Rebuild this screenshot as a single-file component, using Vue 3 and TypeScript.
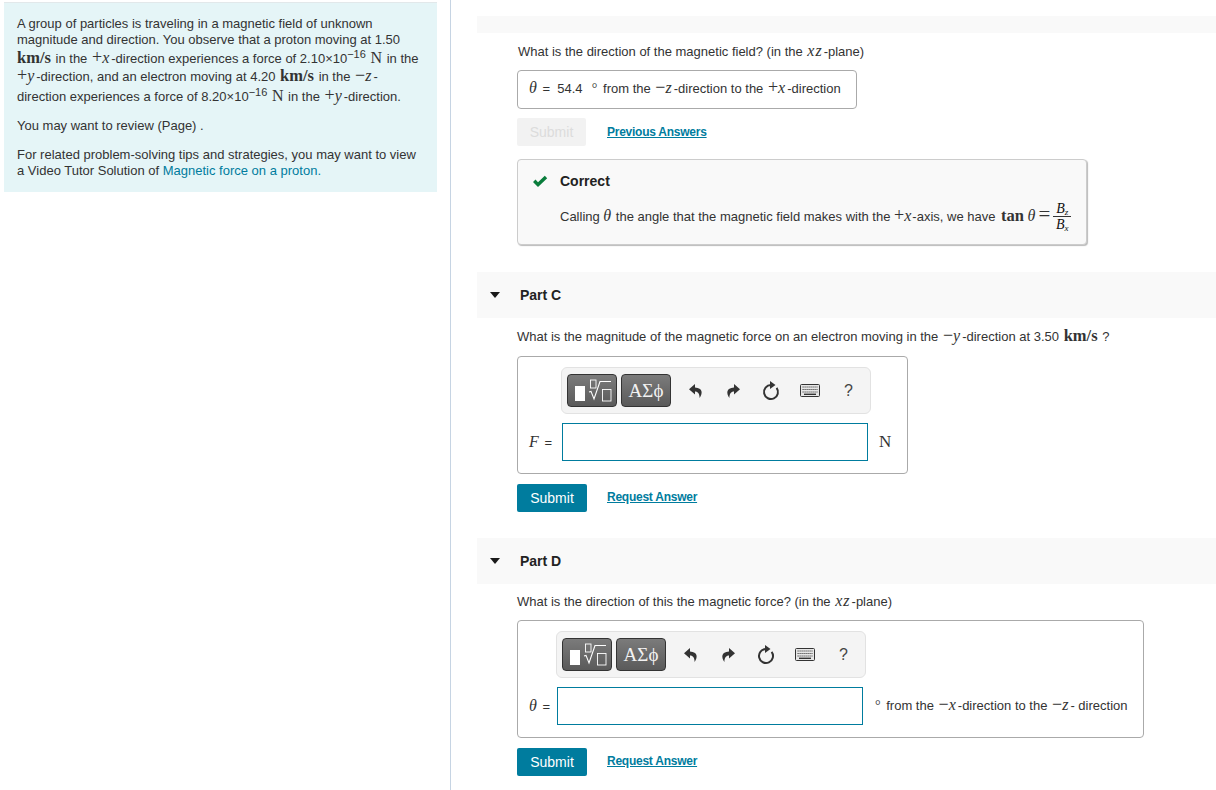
<script setup lang="ts">
interface Part { id: string; title: string; wide: boolean }
const parts: Part[] = [
  { id: 'c', title: 'Part C', wide: false },
  { id: 'd', title: 'Part D', wide: true },
]
</script>

<template>
  <div class="page">
    <aside class="left">
      <div class="callout">
        <div class="l l1">A group of particles is traveling in a magnetic field of unknown</div>
        <div class="l l2">magnitude and direction. You observe that a proton moving at 1.50</div>
        <div class="l l3"><span class="m b">km/s</span> in the <span class="m"><span class="op">+</span><i>x</i></span>-direction experiences a force of 2.10×10<sup class="s">−16</sup> <span class="m n">N</span> in the</div>
        <div class="l l4"><span class="m"><span class="op">+</span><i>y</i></span>-direction, and an electron moving at 4.20 <span class="m b">km/s</span> in the <span class="m"><span class="op">−</span><i>z</i></span>-</div>
        <div class="l l5">direction experiences a force of 8.20×10<sup class="s">−16</sup> <span class="m n">N</span> in the <span class="m"><span class="op">+</span><i>y</i></span>-direction.</div>
        <div class="l l6">You may want to review (Page) .</div>
        <div class="l l7">For related problem-solving tips and strategies, you may want to view</div>
        <div class="l">a Video Tutor Solution of <span class="tl">Magnetic force on a proton.</span></div>
      </div>
    </aside>

    <main class="right">
      <div class="stub"></div>
      <section class="body">
        <p class="q q-b">What is the direction of the magnetic field? (in the <span class="m"><i>xz</i></span>-plane)</p>
        <div class="ans-done">
          <span class="m th"><i>θ</i></span> =&nbsp; 54.4 &nbsp;<span class="deg">°</span> from the <span class="m"><span class="op">−</span><i>z</i></span>-direction to the <span class="m"><span class="op">+</span><i>x</i></span>-direction
        </div>
        <div class="actions">
          <button class="submit off">Submit</button>
          <a class="lnk prev">Previous Answers</a>
        </div>
        <div class="feedback">
          <div class="fb-head">
            <svg class="check" width="16" height="13" viewBox="0 0 16 13"><path d="M1 7 L3.5 4.6 L6 7.2 L12.8 .8 L15.2 3.2 L6 12 Z" fill="#0a7d3c"/></svg>
            <strong>Correct</strong>
          </div>
          <div class="fb-text">
            <span>Calling <span class="m"><i>θ</i></span> the angle that the magnetic field makes with the <span class="m"><span class="op">+</span><i>x</i></span>-axis, we have <span class="m b tan">tan</span> <span class="m"><i>θ</i></span><span class="m eq"><span class="op">=</span></span></span>
            <span class="frac"><span class="num"><i>B<sub>z</sub></i></span><span class="den"><i>B<sub>x</sub></i></span></span>
          </div>
        </div>
      </section>

      <template v-for="p in parts" :key="p.id">
        <header class="bar" :class="'bar-' + p.id">
          <svg class="caret" width="10" height="6" viewBox="0 0 10 6"><path d="M0 0H10L5 6Z" fill="#1a1a1a"/></svg>
          <span>{{ p.title }}</span>
        </header>
        <section class="body" :class="'body-' + p.id">
          <p v-if="p.id === 'c'" class="q">What is the magnitude of the magnetic force on an electron moving in the <span class="m"><span class="op">−</span><i>y</i></span>-direction at 3.50 <span class="m b">km/s</span> ?</p>
          <p v-else class="q">What is the direction of this the magnetic force? (in the <span class="m"><i>xz</i></span>-plane)</p>
          <div class="ans" :class="{ wide: p.wide }">
            <div class="toolbar">
              <div class="tbtn t1">
                <svg width="48" height="31" viewBox="1 1 48 31">
                  <rect x="8" y="12" width="10" height="15" fill="#fff"/>
                  <rect x="23.5" y="6" width="5.5" height="8" fill="none" stroke="#fff" stroke-width=".9"/>
                  <path d="M22 18 L24 17.4 L27 25 L33 7.5 H44" fill="none" stroke="#fff" stroke-width="1.1"/>
                  <rect x="35.5" y="15.5" width="8.5" height="11.5" fill="none" stroke="#fff" stroke-width=".9"/>
                </svg>
              </div>
              <div class="tbtn t2">ΑΣϕ</div>
              <div class="icons">
                <svg width="14" height="14" viewBox="0 0 14 14"><path d="M6 0 L0 5.2 L6 10.5 V7.4 C9 7.4 10.6 9.6 10.6 14 C13.8 9.5 14 3.8 6 3.4 Z" fill="#333"/></svg>
                <svg width="14" height="14" viewBox="0 0 14 14"><path d="M8 0 L14 5.2 L8 10.5 V7.4 C5 7.4 3.4 9.6 3.4 14 C.2 9.5 0 3.8 8 3.4 Z" fill="#333"/></svg>
                <svg width="18" height="20" viewBox="0 0 18 20"><path d="M9 4 A7 7 0 1 0 14.6 6.8" fill="none" stroke="#333" stroke-width="2"/><path d="M8 0 L13.5 4 L8 8 Z" fill="#333"/></svg>
                <svg width="20" height="13" viewBox="0 0 20 13"><rect x=".5" y=".5" width="19" height="12" rx="1" fill="#e6e6e6" stroke="#333"/><path d="M2.5 3H17.5M2.5 5.5H17.5M2.5 8H17.5" stroke="#444" stroke-width="1.2" stroke-dasharray="1.2 .8"/><path d="M4 10.3H16" stroke="#333" stroke-width="1.4"/></svg>
                <span class="help">?</span>
              </div>
            </div>
            <div class="row">
              <label v-if="p.id === 'c'" class="lab"><span class="m th"><i>F</i></span> =</label>
              <label v-else class="lab"><span class="m th"><i>θ</i></span> =</label>
              <div class="inp"></div>
              <span v-if="p.id === 'c'" class="unit">N</span>
              <span v-else class="tail"><span class="deg">°</span> from the <span class="m"><span class="op">−</span><i>x</i></span>-direction to the <span class="m"><span class="op">−</span><i>z</i></span>- direction</span>
            </div>
          </div>
          <div class="actions a2">
            <button class="submit">Submit</button>
            <a class="lnk">Request Answer</a>
          </div>
        </section>
      </template>
    </main>
  </div>
</template>

<style scoped>
.page { display: flex; width: 1216px; height: 790px; overflow: hidden; background: #fff; font-family: "Liberation Sans", Arial, sans-serif; font-size: 13px; color: #333; }
.left { width: 451px; flex: none; box-sizing: border-box; border-right: 1px solid #c6d4e3; padding: 2px 0 0 4px; }
.callout { width: 433px; height: 190px; box-sizing: border-box; background: #e5f5f7; border-top: 1px solid #e2e8ea; padding: 13px 0 0 13px; }
.l { font-size: 13px; line-height: 16px; white-space: nowrap; height: 16px; }
.l3 { margin-top: 3px; }
.l4 { margin-top: 2px; }
.l5 { margin-top: 4px; }
.l6 { margin-top: 13px; }
.l7 { margin-top: 13px; }
.tl { color: #007c9e; }
.m { font-family: "Liberation Serif", serif; font-size: 16px; line-height: 0; margin: 0 1px; }
.m.th { margin-left: 0; }
.l3 > .b:first-child { margin-left: 0; }
.l4 > .m:first-child { margin-left: 0; }
.m i { font-style: italic; letter-spacing: 1px; }
.op { font-size: 18px; }
.b { font-weight: 700; font-size: 16.5px; }
.n { font-weight: 400; font-size: 16px; }
.s { font-size: 11px; line-height: 0; vertical-align: 5px; font-weight: 400; }
.right { flex: 1; min-width: 0; padding-left: 26px; }
.stub { height: 17px; margin-top: 16px; background: #f9f9f9; }
.body { padding-left: 40px; }
.q { margin: 0; font-size: 13px; line-height: 18px; white-space: nowrap; padding-top: 10px; }
.q-b { padding-left: 1px; }
.body-d .q { padding-top: 9px; }
.ans-done { width: 340px; height: 39px; box-sizing: border-box; margin-top: 9px; border: 1px solid #aaa; border-radius: 4px; padding-left: 11px; line-height: 35px; white-space: nowrap; }
.deg { font-family: "Liberation Serif", serif; font-size: 14px; margin: 0 2px; }
.actions { display: flex; align-items: center; margin-top: 9px; height: 28px; }
.a2 { margin-top: 10px; }
.submit { width: 70px; height: 28px; border: 0; border-radius: 2px; background: #007c9e; color: #fff; font: 14px "Liberation Sans", Arial, sans-serif; padding: 0; }
.submit.off { background: #f2f2f2; color: #dcdcdc; width: 69px; }
.actions .off + .lnk { margin-left: 21px; }
.lnk { margin-left: 20px; margin-bottom: 2px; color: #007c9e; font-size: 12px; letter-spacing: -.25px; font-weight: 700; text-decoration: underline; }
.lnk.prev { margin-bottom: 0; }
.feedback { width: 570px; height: 86px; box-sizing: border-box; margin-top: 13px; background: #f9f9f9; border: 1px solid #ccc; border-radius: 4px; box-shadow: 1px 1px 1px #bbb; }
.fb-head { display: flex; align-items: center; height: 20px; margin-top: 11px; padding-left: 14px; }
.check { margin-right: 12px; }
.fb-head strong { font-size: 14px; color: #222; }
.fb-text { display: flex; align-items: center; height: 40px; margin-top: 5px; padding-left: 42px; white-space: pre; }
.fb-text .m { margin: 0; }
.fb-text .tan { margin-left: 2px; }
.fb-text .eq { margin-left: 2px; }
.fb-text .eq .op { font-size: 21px; }
.frac { display: inline-flex; flex-direction: column; align-items: center; font-family: "Liberation Serif", serif; font-size: 14px; margin-left: 3px; color: #111; }
.num { border-bottom: 1px solid #333; padding: 0 3px; line-height: 15px; }
.den { line-height: 15px; }
.frac sub { font-size: 9px; line-height: 0; vertical-align: -2px; }
.bar { display: flex; align-items: center; height: 46px; margin-top: 27px; background: #f9f9f9; font-weight: 700; font-size: 14px; color: #222; }
.bar-d { margin-top: 26px; }
.caret { margin: 0 20px 0 13px; }
.ans { width: 391px; height: 118px; box-sizing: border-box; margin-top: 10px; border: 1px solid #aaa; border-radius: 4px; padding-top: 10px; }
.ans.wide { width: 627px; margin-top: 9px; }
.toolbar { display: flex; align-items: center; width: 310px; height: 47px; box-sizing: border-box; margin-left: 43px; background: #f4f4f4; border: 1px solid #e2e2e2; border-radius: 6px; padding-left: 5px; }
.wide .toolbar { margin-left: 38px; }
.tbtn { display: flex; align-items: center; justify-content: center; width: 50px; height: 33px; box-sizing: border-box; border: 1px solid #333; border-radius: 4px; background: linear-gradient(#7b7b7b, #5a5a5a); color: #f2f2f2; }
.t2 { margin-left: 4px; font-family: "Liberation Serif", serif; font-size: 19px; }
.icons { display: flex; align-items: center; margin-left: 18px; }
.icons svg:nth-child(1) { margin-right: 23px; }
.icons svg:nth-child(2) { margin-right: 22px; }
.icons svg:nth-child(3) { margin-right: 20px; }
.icons svg:nth-child(4) { margin-right: 24px; }
.help { font-size: 16px; color: #444; }
.row { display: flex; align-items: center; margin-top: 9px; height: 38px; }
.lab { width: 44px; box-sizing: border-box; padding-left: 11px; white-space: nowrap; }
.wide .lab { width: 39px; }
.inp { width: 306px; height: 38px; box-sizing: border-box; border: 1px solid #007c9e; background: #fff; }
.unit { margin-left: 11px; font-family: "Liberation Serif", serif; font-size: 17px; }
.tail { margin-left: 10px; white-space: nowrap; }
</style>
